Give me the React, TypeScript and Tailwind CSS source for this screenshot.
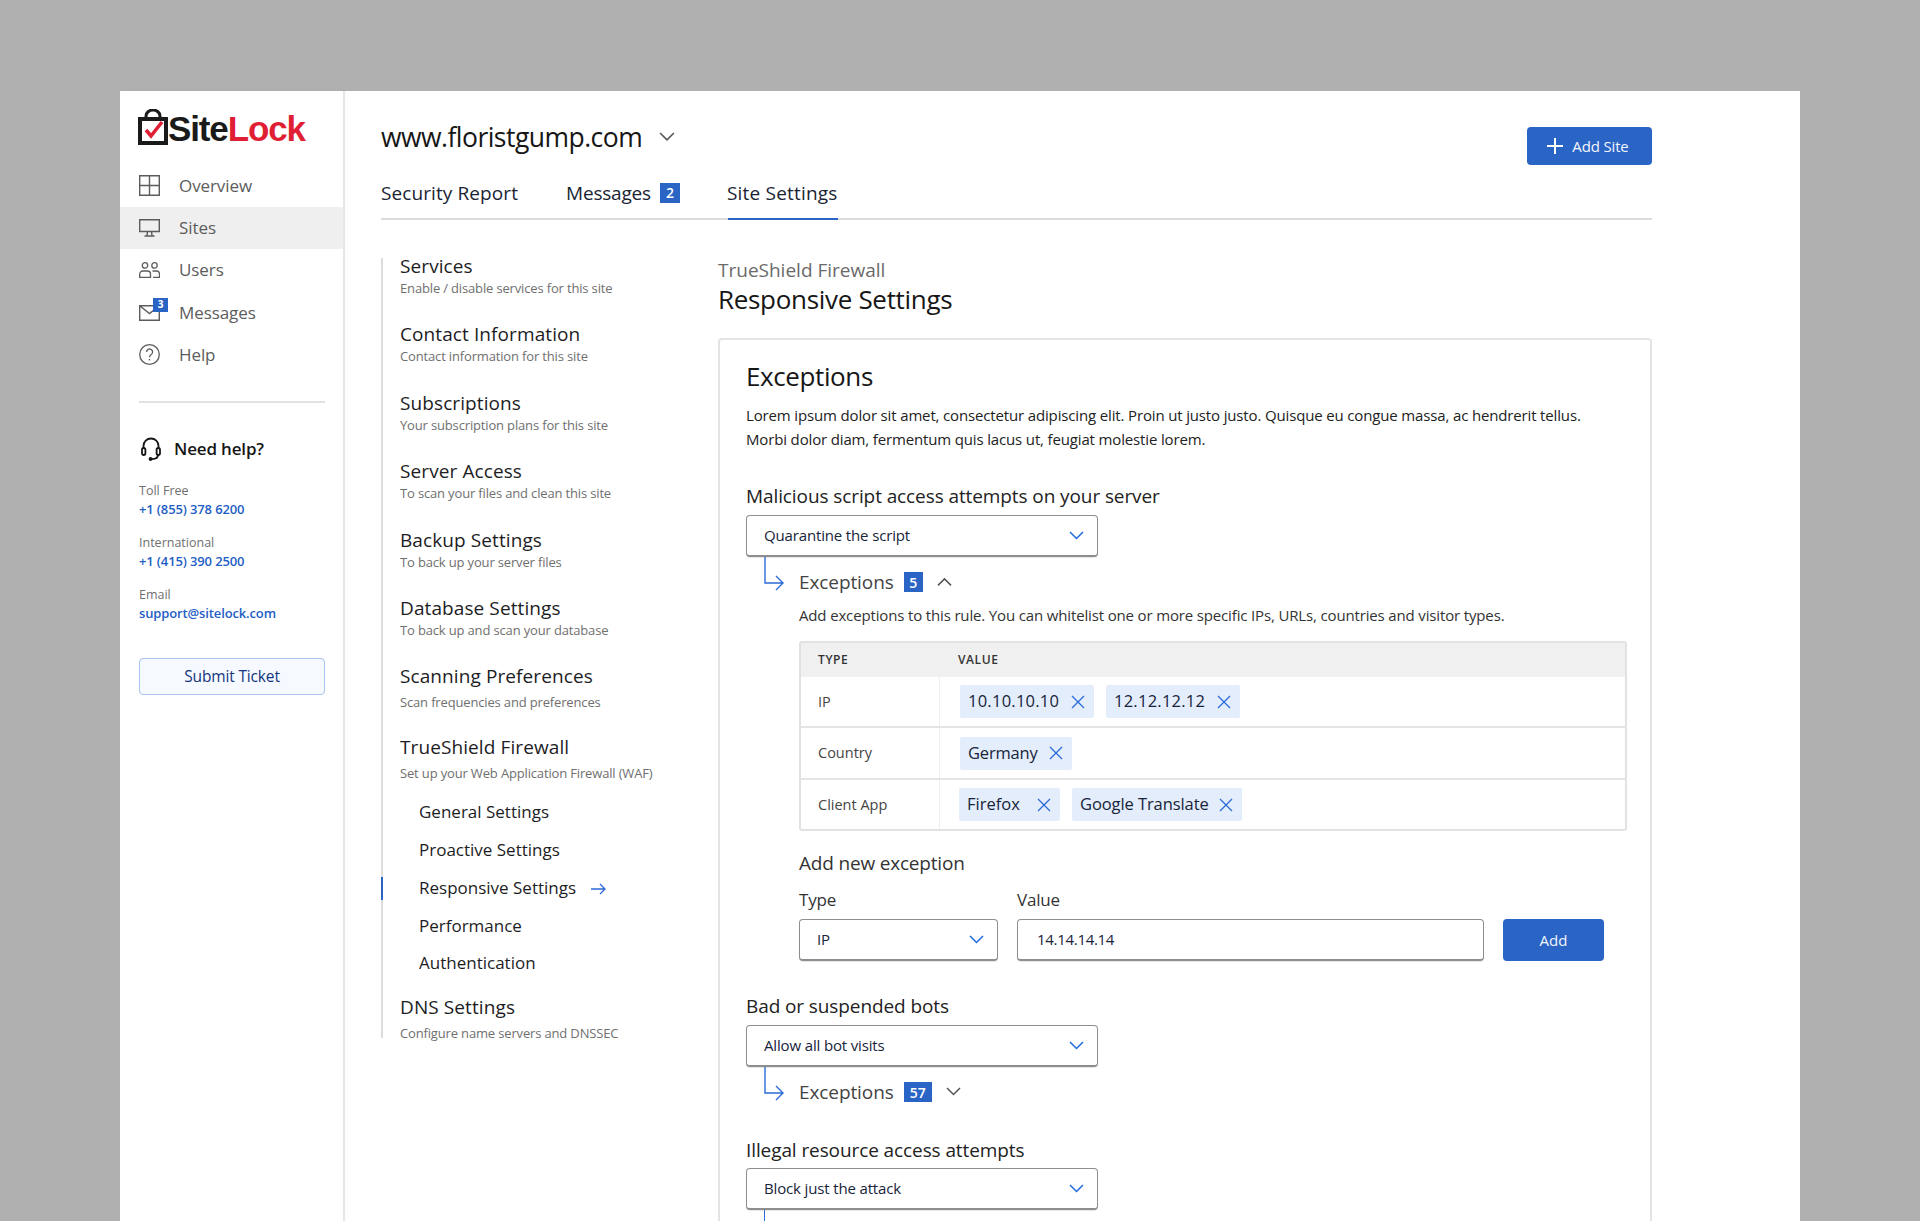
import React from "react";

const Chevron = ({ up, color = "#1f6be0", w = 15 }: { up?: boolean; color?: string; w?: number }) => (
  <svg width={w} height={w * 0.62} viewBox="0 0 16 10" fill="none" stroke={color} strokeWidth="1.6">
    <path d={up ? "M1 9 L8 2 L15 9" : "M1 1 L8 8 L15 1"} />
  </svg>
);

const Cross = () => (
  <svg width="14" height="14" viewBox="0 0 14 14" fill="none" stroke="#2a6bd6" strokeWidth="1.3">
    <path d="M1 1 L13 13 M13 1 L1 13" />
  </svg>
);

const Badge = ({ n, cls }: { n: string; cls: string }) => (
  <span className={`flex h-[20px] items-center justify-center bg-[#2a64c4] text-[14px] font-semibold text-white ${cls}`}>{n}</span>
);

const Select = ({ label, cls }: { label: string; cls: string }) => (
  <div className={`flex h-[42px] items-center justify-between rounded-[4px] border border-[#8e8e8e] border-b-2 bg-white pl-[17px] pr-[13px] text-[15px] tracking-[-0.01em] text-[#17243a] shadow-[0_1px_1px_rgba(0,0,0,0.1)] ${cls}`}>
    <span>{label}</span>
    <Chevron />
  </div>
);

const Connector = () => (
  <svg className="absolute left-[18px] top-[-9px]" width="22" height="38" viewBox="0 0 22 38" fill="none" stroke="#2a6bd6" strokeWidth="1.4">
    <path d="M1 0 V26 H19 M12 19 L19 26 L12 33" />
  </svg>
);

const Tag = ({ text, cls }: { text: string; cls: string }) => (
  <span className={`flex h-[33px] items-center justify-between rounded-[2px] bg-[#e3edfb] pl-[8px] pr-[9px] text-[16.5px] text-[#17243a] ${cls}`}>
    {text}
    <Cross />
  </span>
);

const NavItem = ({ icon, label, active }: { icon: React.ReactNode; label: string; active?: boolean }) => (
  <div className={`flex h-[42.3px] items-center pl-[19px] text-[17px] font-medium tracking-[-0.005em] text-[#5c5c5c] ${active ? "bg-[#efefef]" : ""}`}>
    <span className="flex w-[40px] items-center">{icon}</span>
    {label}
  </div>
);

const SubItem = ({ title, sub }: { title: string; sub: string }) => (
  <div className="h-[68.4px]">
    <div className="text-[19px] leading-[16px] tracking-[0.005em] text-[#1d1d1f]">{title}</div>
    <div className="mt-[4px] text-[13px] leading-[20px] tracking-[-0.012em] text-[#6f6f6f]">{sub}</div>
  </div>
);

const stroke = "#5c5c5c";

export default function App() {
  return (
    <div className="h-[1221px] overflow-hidden bg-[#b0b0b0] px-[120px] pt-[91px] font-['Open_Sans',sans-serif]">
      <div className="flex h-[1130px] bg-white">
        {/* Sidebar */}
        <aside className="w-[225px] shrink-0 border-r-2 border-[#e6e6e6] shadow-[3px_0_6px_rgba(0,0,0,0.02)]">
          <div className="ml-[18px] mt-[18px] flex h-[36px] items-end">
            <svg width="30" height="36" viewBox="0 0 30 36" fill="none">
              <path d="M8 10 V7 a7 6 0 0 1 14 0 V10" stroke="#1a1a1a" strokeWidth="3" />
              <rect x="2" y="10" width="26" height="24" stroke="#1a1a1a" strokeWidth="4" />
              <path d="M8 21 L13 27 L24 13" stroke="#e01f35" strokeWidth="3.6" />
            </svg>
            <span className="font-['Liberation_Sans',sans-serif] text-[35px] font-bold leading-[33px] tracking-[-0.032em]">
              <span className="text-[#1a1a1a]">Site</span>
              <span className="text-[#e01f35]">Lock</span>
            </span>
          </div>
          <nav className="mt-[19.5px]">
            <NavItem
              label="Overview"
              icon={
                <svg width="21" height="21" viewBox="0 0 21 21" fill="none" stroke={stroke} strokeWidth="1.4">
                  <path d="M.7.7 H20.3 V20.3 H.7 Z M10.5.7 V20.3 M.7 10.5 H20.3" />
                </svg>
              }
            />
            <NavItem
              active
              label="Sites"
              icon={
                <svg width="21" height="18" viewBox="0 0 21 18" fill="none" stroke={stroke} strokeWidth="1.4">
                  <path d="M.7.7 H20.3 V12.5 H.7 Z M8.5 12.5 L8 16.5 M12.5 12.5 L13 16.5 M5.5 17 H15.5" />
                </svg>
              }
            />
            <NavItem
              label="Users"
              icon={
                <svg width="21" height="16" viewBox="0 0 21 16" fill="none" stroke={stroke} strokeWidth="1.3">
                  <circle cx="6" cy="3.4" r="2.7" />
                  <circle cx="15.5" cy="3.4" r="2.7" />
                  <path d="M.7 15.3 V12 a3 3 0 0 1 3-3 H8.5 a3 3 0 0 1 3 3 V15.3 Z M13.5 9 H17.5 a3 3 0 0 1 3 3 V15.3 H14" />
                </svg>
              }
            />
            <NavItem
              label="Messages"
              icon={
                <span className="relative flex">
                  <svg width="21" height="16" viewBox="0 0 21 16" fill="none" stroke={stroke} strokeWidth="1.4">
                    <path d="M.7.7 H20.3 V15.3 H.7 Z M.7.7 L10.5 8.5 L20.3.7" />
                  </svg>
                  <span className="absolute right-[-8px] top-[-7px] flex h-[14px] w-[15px] items-center justify-center bg-[#2a64c4] text-[10px] font-bold text-white">3</span>
                </span>
              }
            />
            <NavItem
              label="Help"
              icon={
                <svg width="21" height="21" viewBox="0 0 21 21" fill="none" stroke={stroke} strokeWidth="1.3">
                  <circle cx="10.5" cy="10.5" r="9.8" />
                  <path d="M7.6 8 a3 3 0 1 1 4.6 2.5 c-1.2.8-1.7 1.3-1.7 2.7" />
                  <path d="M10.5 15 v1.4" />
                </svg>
              }
            />
          </nav>
          <div className="ml-[19px] mr-[19px] mt-[25px] h-[2px] w-[186px] bg-[#e2e2e2]" />
          <div className="ml-[19px] mt-[34px] flex h-[24px] items-center text-[17px] font-semibold tracking-[-0.01em] text-[#161616]">
            <svg className="ml-[2px] mr-[13px]" width="20" height="24" viewBox="0 0 20 24" fill="none" stroke="#161616" strokeWidth="1.8">
              <path d="M2.5 12 V9 a7.5 7.5 0 0 1 15 0 V12" />
              <rect x="1" y="11" width="3.4" height="7" rx="1.7" />
              <rect x="15.6" y="11" width="3.4" height="7" rx="1.7" />
              <path d="M17 18 c0 3-3 4-6 4" />
              <circle cx="9.5" cy="22" r="1" />
            </svg>
            Need help?
          </div>
          <div className="ml-[19px] mt-[20px] flex flex-col gap-[14px] text-[12.5px] leading-[19px] text-[#6f6f6f]">
            <div>
              <div>Toll Free</div>
              <div className="text-[13px] font-semibold tracking-[-0.01em] text-[#1f5fc6]">+1 (855) 378 6200</div>
            </div>
            <div>
              <div>International</div>
              <div className="text-[13px] font-semibold tracking-[-0.01em] text-[#1f5fc6]">+1 (415) 390 2500</div>
            </div>
            <div>
              <div>Email</div>
              <div className="text-[13px] font-semibold tracking-[-0.01em] text-[#1f5fc6]">support@sitelock.com</div>
            </div>
          </div>
          <div className="ml-[19px] mt-[35px] flex h-[37px] w-[186px] items-center justify-center rounded-[4px] border border-[#a9c4ee] bg-[#f6f9ff] text-[15.5px] tracking-[-0.01em] text-[#12357c]">
            Submit Ticket
          </div>
        </aside>

        {/* Main */}
        <main className="ml-[36px] w-[1271px] shrink-0">
          <div className="flex h-[74px] justify-between pt-[36px]">
            <div className="flex h-[36px] items-center gap-[17px] pb-[16px] text-[26.5px] leading-[20px] tracking-[-0.02em] text-[#161616]">
              <span>www.floristgump.com</span>
              <Chevron color="#555" w={16} />
            </div>
            <div className="flex h-[38px] w-[125px] items-center justify-center gap-[9px] rounded-[4px] bg-[#2a64c4] pr-[3px] text-[15px] tracking-[-0.01em] text-[#f2f6fd]">
              <svg width="16" height="16" viewBox="0 0 16 16" stroke="#fff" strokeWidth="2">
                <path d="M8 0 V16 M0 8 H16" />
              </svg>
              Add Site
            </div>
          </div>
          <div className="mt-[15px] flex h-[40px] items-start border-b-2 border-[#dcdcdc] text-[19px] leading-[26px] text-[#1a2433]">
            <span className="w-[185px] tracking-[0.005em]">Security Report</span>
            <span className="flex w-[161px] items-center tracking-[-0.01em]">
              Messages
              <Badge n="2" cls="ml-[9px] w-[20px]" />
            </span>
            <span className="relative tracking-[0.01em]">
              Site Settings
              <span className="absolute bottom-[-14px] left-[1px] h-[2px] w-[110px] bg-[#2a64c4]" />
            </span>
          </div>

          <div className="mt-[38px] flex">
            {/* Sub nav */}
            <div className="w-[337px] shrink-0">
              <div className="h-[780px] w-[300px] border-l-2 border-[#dcdcdc] pl-[17px]">
                <SubItem title="Services" sub="Enable / disable services for this site" />
                <SubItem title="Contact Information" sub="Contact information for this site" />
                <SubItem title="Subscriptions" sub="Your subscription plans for this site" />
                <SubItem title="Server Access" sub="To scan your files and clean this site" />
                <SubItem title="Backup Settings" sub="To back up your server files" />
                <SubItem title="Database Settings" sub="To back up and scan your database" />
                <div className="h-[71px]">
                  <div className="text-[19px] leading-[16px] tracking-[0.005em] text-[#1d1d1f]">Scanning Preferences</div>
                  <div className="mt-[8px] text-[13px] leading-[20px] tracking-[-0.012em] text-[#6f6f6f]">Scan frequencies and preferences</div>
                </div>
                <div className="h-[54px]">
                  <div className="text-[19px] leading-[16px] tracking-[0.005em] text-[#1d1d1f]">TrueShield Firewall</div>
                  <div className="mt-[8px] text-[13px] leading-[20px] tracking-[-0.012em] text-[#6f6f6f]">Set up your Web Application Firewall (WAF)</div>
                </div>
                <div className="pl-[19px] text-[17px] text-[#1d1d1f]">
                  <div className="flex h-[37.7px] items-center">General Settings</div>
                  <div className="flex h-[37.7px] items-center">Proactive Settings</div>
                  <div className="relative flex h-[37.7px] items-center">
                    <span className="absolute left-[-38px] top-[8px] h-[23px] w-[2px] bg-[#2a64c4]" />
                    Responsive Settings
                    <svg className="ml-[15px] mt-[2px]" width="15" height="12" viewBox="0 0 15 12" fill="none" stroke="#2a6bd6" strokeWidth="1.3">
                      <path d="M0 6 H14 M9 1 L14 6 L9 11" />
                    </svg>
                  </div>
                  <div className="flex h-[37.7px] items-center">Performance</div>
                  <div className="flex h-[37.7px] items-center">Authentication</div>
                </div>
                <div className="mt-[17px]">
                  <div className="text-[19px] leading-[16px] tracking-[0.005em] text-[#1d1d1f]">DNS Settings</div>
                  <div className="mt-[8px] text-[13px] leading-[20px] tracking-[-0.012em] text-[#6f6f6f]">Configure name servers and DNSSEC</div>
                </div>
              </div>
            </div>

            {/* Right column */}
            <div className="w-[934px] shrink-0">
              <div className="text-[19px] leading-[25px] text-[#6a6a6a]">TrueShield Firewall</div>
              <div className="text-[26px] leading-[33px] tracking-[-0.012em] text-[#161616]">Responsive Settings</div>
              <div className="mt-[22px] h-[900px] rounded-[4px] border-2 border-[#e4e4e4] pl-[26px] pr-[23px] pt-[18px]">
                <h2 className="text-[26px] leading-[36px] tracking-[-0.015em] text-[#161616]">Exceptions</h2>
                <p className="mt-[9px] text-[15px] leading-[24px] tracking-[-0.01em] text-[#222]">
                  Lorem ipsum dolor sit amet, consectetur adipiscing elit. Proin ut justo justo. Quisque eu congue massa, ac hendrerit tellus.
                  <br />
                  Morbi dolor diam, fermentum quis lacus ut, feugiat molestie lorem.
                </p>

                <div className="mt-[32px] text-[19px] leading-[26px] tracking-[-0.005em] text-[#222]">Malicious script access attempts on your server</div>
                <Select label="Quarantine the script" cls="mt-[6px] w-[352px]" />
                <div className="relative mt-[9px] flex h-[32px] items-center pl-[53px] text-[19px] tracking-[-0.005em] text-[#444]">
                  <Connector />
                  Exceptions
                  <Badge n="5" cls="ml-[10px] w-[19px]" />
                  <span className="ml-[14px]">
                    <Chevron up color="#555" />
                  </span>
                </div>
                <div className="ml-[53px] mt-[5px] text-[15px] leading-[24px] tracking-[-0.01em] text-[#333]">
                  Add exceptions to this rule. You can whitelist one or more specific IPs, URLs, countries and visitor types.
                </div>

                <div className="ml-[53px] mt-[14px] h-[190px] w-[828px] overflow-hidden rounded-[3px] border-2 border-[#e2e2e2] text-[14.5px] text-[#444]">
                  <div className="flex h-[34px] items-center bg-[#f0f0f0] pb-[1px] text-[12px] font-semibold tracking-[0.05em] text-[#333]">
                    <span className="w-[157px] pl-[17px]">TYPE</span>
                    <span>VALUE</span>
                  </div>
                  <div className="flex h-[51px] border-b-2 border-[#e4e4e4]">
                    <div className="flex w-[139px] items-center border-r border-[#efefef] pl-[17px]">IP</div>
                    <div className="flex items-center gap-[12px] pl-[20px]">
                      <Tag text="10.10.10.10" cls="w-[134px] tracking-[0.015em]" />
                      <Tag text="12.12.12.12" cls="w-[134px] tracking-[0.015em]" />
                    </div>
                  </div>
                  <div className="flex h-[52px] border-b-2 border-[#e4e4e4]">
                    <div className="flex w-[139px] items-center border-r border-[#efefef] pl-[17px]">Country</div>
                    <div className="flex items-center gap-[12px] pl-[20px]">
                      <Tag text="Germany" cls="w-[112px] tracking-[-0.01em]" />
                    </div>
                  </div>
                  <div className="flex h-[49px]">
                    <div className="flex w-[139px] items-center border-r border-[#efefef] pl-[17px]">Client App</div>
                    <div className="flex items-center gap-[12px] pl-[19px]">
                      <Tag text="Firefox" cls="w-[101px]" />
                      <Tag text="Google Translate" cls="w-[170px] tracking-[-0.005em]" />
                    </div>
                  </div>
                </div>

                <div className="ml-[53px] mt-[18px] text-[19px] leading-[28px] tracking-[-0.01em] text-[#333]">Add new exception</div>
                <div className="ml-[53px] mt-[11px] flex text-[17px] leading-[24px] tracking-[-0.01em] text-[#333]">
                  <span className="w-[218px]">Type</span>
                  <span>Value</span>
                </div>
                <div className="ml-[53px] mt-[7px] flex gap-[19px]">
                  <Select label="IP" cls="w-[199px]" />
                  <div className="flex h-[42px] w-[467px] items-center rounded-[4px] border border-b-2 border-[#8e8e8e] bg-white pl-[19px] text-[15px] tracking-[-0.02em] text-[#17243a] shadow-[0_1px_1px_rgba(0,0,0,0.1)]">
                    14.14.14.14
                  </div>
                  <div className="flex h-[42px] w-[101px] items-center justify-center rounded-[4px] bg-[#2a64c4] text-[15px] text-[#f2f6fd]">Add</div>
                </div>

                <div className="mt-[32px] text-[19px] leading-[26px] tracking-[-0.005em] text-[#222]">Bad or suspended bots</div>
                <Select label="Allow all bot visits" cls="mt-[6px] w-[352px]" />
                <div className="relative mt-[9px] flex h-[32px] items-center pl-[53px] text-[19px] tracking-[-0.005em] text-[#444]">
                  <Connector />
                  Exceptions
                  <Badge n="57" cls="ml-[10px] w-[28px]" />
                  <span className="ml-[14px]">
                    <Chevron color="#555" />
                  </span>
                </div>

                <div className="mt-[29px] text-[19px] leading-[26px] tracking-[-0.005em] text-[#222]">Illegal resource access attempts</div>
                <Select label="Block just the attack" cls="mt-[5px] w-[352px]" />
                <div className="ml-[18px] h-[12px] w-[1.4px] bg-[#2a6bd6]" />
              </div>
            </div>
          </div>
        </main>
      </div>
    </div>
  );
}
